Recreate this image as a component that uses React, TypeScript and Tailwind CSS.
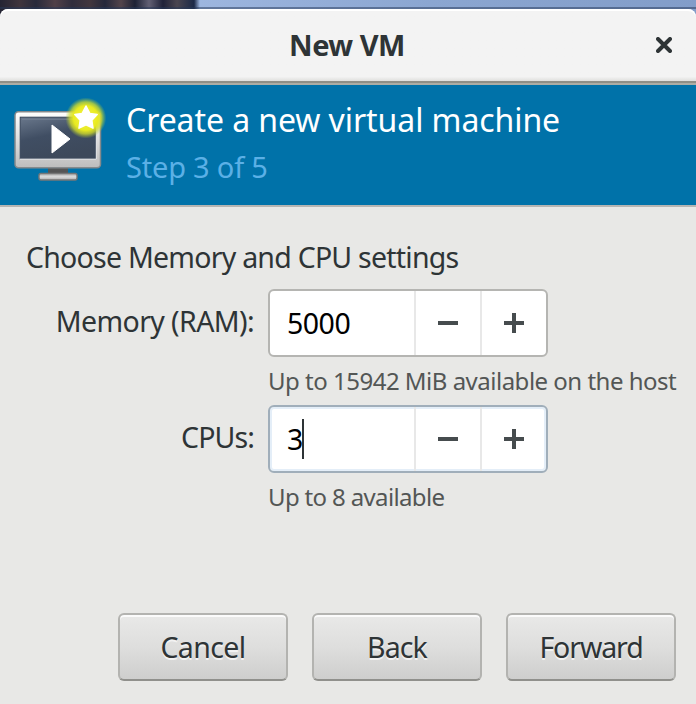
import React from "react";

const FONT = "font-['Noto_Sans','Open_Sans',sans-serif]";

function MachineIcon() {
  return (
    <svg width="96" height="96" viewBox="8 93 96 96" className="block shrink-0 overflow-visible" aria-hidden="true">
      <defs>
        <linearGradient id="frame" x1="0" y1="0" x2="0" y2="1">
          <stop offset="0" stopColor="#ffffff" />
          <stop offset="1" stopColor="#bdbdbd" />
        </linearGradient>
        <linearGradient id="screen" x1="0" y1="0" x2="0.4" y2="1">
          <stop offset="0" stopColor="#6a788c" />
          <stop offset="0.5" stopColor="#404e63" />
          <stop offset="1" stopColor="#3d495b" />
        </linearGradient>
        <linearGradient id="base" x1="0" y1="0" x2="0" y2="1">
          <stop offset="0" stopColor="#a8a8a8" />
          <stop offset="0.5" stopColor="#dddddd" />
          <stop offset="1" stopColor="#aaaaaa" />
        </linearGradient>
        <radialGradient id="glow">
          <stop offset="0" stopColor="#f8f650" />
          <stop offset="0.6" stopColor="#e8ea20" />
          <stop offset="0.78" stopColor="#d5df28" stopOpacity="0.75" />
          <stop offset="1" stopColor="#a8c838" stopOpacity="0" />
        </radialGradient>
      </defs>
      <rect x="48" y="167" width="20" height="7" fill="#555" />
      <rect x="39" y="173.5" width="38" height="6.5" rx="2" fill="url(#base)" stroke="#777" strokeWidth="1.4" />
      <rect x="15" y="111.7" width="85.5" height="56" rx="3.5" fill="url(#frame)" stroke="#85898c" strokeWidth="1.5" />
      <rect x="20.2" y="117.2" width="75.8" height="41.6" fill="url(#screen)" stroke="#37455a" strokeWidth="1" />
      <path d="M20 159.2H96.3V117" fill="none" stroke="#f4f4f4" strokeWidth="1" />
      <path d="M22 119.2H94" stroke="#748296" strokeWidth="1" />
      <path d="M52 125L70 139L52 153Z" fill="#fff" stroke="#fff" strokeWidth="1" strokeLinejoin="round" />
      <circle cx="85.8" cy="118" r="20.5" fill="url(#glow)" />
      <path
        d="M86 106L89.8 113.4L97.2 114.6L91.8 120.2L93 128.2L86 124.8L79 128.2L80.2 120.2L74.8 114.6L82.2 113.4Z"
        fill="#fff"
        stroke="#fff"
        strokeWidth="1.5"
        strokeLinejoin="round"
      />
    </svg>
  );
}

function SpinBox({ value, focused = false }: { value: string; focused?: boolean }) {
  return (
    <div
      className={`flex h-[68px] w-[280px] rounded-[6px] border-2 bg-white ${
        focused ? "border-[#a0aeba] shadow-[inset_0_0_0_2px_#e4eef8]" : "border-[#b5b5b2]"
      }`}
    >
      <div className="flex w-[144px] items-center pl-[17px] text-[28.5px] leading-[64px] text-black">
        <span className="pb-px tracking-[-0.5px]">{value}</span>
        {focused && <span className="-ml-px h-[40px] w-[2px] bg-[#2e3436]" />}
      </div>
      <button className="flex w-[66px] items-center justify-center border-l-2 border-[#e8e8e8]">
        <svg width="20" height="20" viewBox="0 0 20 20" aria-label="Decrease">
          <path d="M0 8H20V12H0Z" fill="#464c4e" />
        </svg>
      </button>
      <button className="flex w-[66px] items-center justify-center border-l-2 border-[#e8e8e8]">
        <svg width="20" height="20" viewBox="0 0 20 20" aria-label="Increase">
          <path d="M8 0H12V8H20V12H12V20H8V12H0V8H8Z" fill="#464c4e" />
        </svg>
      </button>
    </div>
  );
}

function DialogButton({ label, tracking }: { label: string; tracking: string }) {
  return (
    <button className="flex h-[68px] w-[170px] items-center justify-center rounded-[6px] border-2 border-[#b3b3b0] border-b-[#90908c] bg-linear-to-b from-[#e9e9e8] via-[#dededd] to-[#cececd] shadow-[inset_0_2px_0_#fbfbfb] text-[28.5px] leading-[64px] text-[#2e3436] [text-shadow:0_2px_0_#f2f2f2]">
      <span className={tracking}>{label}</span>
    </button>
  );
}

export default function App() {
  return (
    <div className={`flex h-[704px] w-[696px] flex-col overflow-hidden whitespace-nowrap bg-[#e8e8e6] text-[#2e3436] ${FONT}`}>
      <div className="h-[83px] shrink-0 bg-[linear-gradient(90deg,#242433_0,#40353d_20px,#282a3b_36px,#514048_55px,#302d3d_72px,#42363e_90px,#25283b_105px,#53444b_121px,#1e2235_135px,#626074_149px,#202239_163px,#4b4650_177px,#1c2946_194px,#9db6df_200px,#8ba6d1_430px,#829dc9_696px)]">
        <div className="h-[7px]" />
        <div className="h-[2px] bg-[#263858]/50" />
        <header className="flex h-[74px] items-center rounded-t-[8px] border-b-2 border-[#8f8f87] bg-linear-to-b from-[#f3f3f3] from-94% to-[#dfdfdd] pr-[24px] shadow-[inset_0_2px_0_#ffffff]">
          <h1 className="flex-1 pl-[38px] text-center text-[29px] leading-[72px] font-bold tracking-[-0.5px]">New VM</h1>
          <svg width="16" height="16" viewBox="0 0 16 16" aria-label="Close">
            <path d="M2 2L14 14M14 2L2 14" stroke="#2e3436" strokeWidth="4" strokeLinecap="round" />
          </svg>
        </header>
      </div>
      <section className="flex h-[124px] shrink-0 border-t-2 border-b-2 border-t-[#adada5] border-b-[#b5b5b3] bg-[#0072a9] pl-[8px] pt-[8px]">
        <MachineIcon />
        <div className="pt-[5px] pl-[22px]">
          <h2 className="h-[48px] text-[32px] leading-[44px] tracking-[-0.08px] text-white">Create a new virtual machine</h2>
          <p className="text-[29px] leading-[42px] tracking-[-0.2px] text-[#5bb0e6]">Step 3 of 5</p>
        </div>
      </section>
      <main className="flex flex-1 flex-col">
        <p className="mt-[30px] ml-[26px] h-[52px] text-[28.5px] leading-[40px] tracking-[-0.76px]">Choose Memory and CPU settings</p>
        <div className="grid grid-cols-[256px_1fr] gap-x-[12px]">
          <label className="pr-[2px] text-right text-[28.5px] leading-[65px] tracking-[-0.6px]">Memory (RAM):</label>
          <SpinBox value="5000" />
          <p className="col-start-2 h-[48px] text-[24px] leading-[47px] tracking-[-0.5px] text-[#535655]">Up to 15942 MiB available on the host</p>
          <label className="pr-[2px] text-right text-[28.5px] leading-[65px] tracking-[-0.9px]">CPUs:</label>
          <SpinBox value="3" focused />
          <p className="col-start-2 h-[48px] text-[24px] leading-[47px] tracking-[-0.65px] text-[#535655]">Up to 8 available</p>
        </div>
        <footer className="mt-auto mb-[23px] flex justify-end gap-6 pr-[20px]">
          <DialogButton label="Cancel" tracking="tracking-[-0.6px]" />
          <DialogButton label="Back" tracking="tracking-[-0.9px]" />
          <DialogButton label="Forward" tracking="tracking-[-1.1px]" />
        </footer>
      </main>
    </div>
  );
}
